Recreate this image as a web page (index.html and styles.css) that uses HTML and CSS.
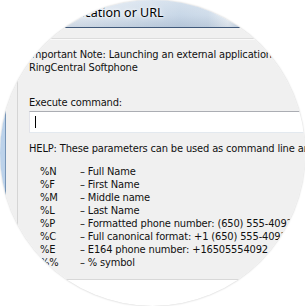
FILE: index.html
```html
<!DOCTYPE html>
<html lang="en">
<head>
    <meta charset="UTF-8">
    <meta name="viewport" content="width=device-width, initial-scale=1.0">
    <title>Launch Application or URL</title>
    <link rel="stylesheet" href="styles.css">
</head>
<body>
    <div class="lens">
        <div class="window">
            <div class="titlebar">
                <span class="title">Launch Application or URL</span>
            </div>

            <div class="frame">
                <div class="client">
                    <div class="strip"></div>

                    <div class="panel">
                        <p class="note">
                            Important Note: Launching an external application may bring it in front of the<br>
                            RingCentral Softphone
                        </p>

                        <label class="field-label">Execute command:</label>
                        <div class="cmd-input"><span class="caret"></span></div>

                        <p class="help">HELP: These parameters can be used as command line arguments:</p>

                        <div class="params">
                            <span class="code">%N</span><span class="desc">&ndash; Full Name</span>
                            <span class="code">%F</span><span class="desc">&ndash; First Name</span>
                            <span class="code">%M</span><span class="desc">&ndash; Middle name</span>
                            <span class="code">%L</span><span class="desc">&ndash; Last Name</span>
                            <span class="code">%P</span><span class="desc">&ndash; Formatted phone number: (650) 555-4092</span>
                            <span class="code">%C</span><span class="desc">&ndash; Full canonical format: +1 (650) 555-4092</span>
                            <span class="code">%E</span><span class="desc">&ndash; E164 phone number: +16505554092</span>
                            <span class="code">%%</span><span class="desc">&ndash; % symbol</span>
                        </div>
                    </div>
                </div>
            </div>
        </div>
    </div>
</body>
</html>
```

FILE: styles.css
```css
* {
    margin: 0;
    padding: 0;
    box-sizing: border-box;
}

body {
    background: #fff;
    font-family: "DejaVu Sans Condensed", "DejaVu Sans", sans-serif;
    font-stretch: condensed;
    font-size: 11px;
    letter-spacing: -0.15px;
    color: #111;
}

/* magnifier circle */
.lens {
    width: 305px;
    height: 306px;
    border-radius: 50%;
    overflow: hidden;
    box-shadow: 0 0 2px rgba(0, 0, 0, 0.25);
}

.window {
    width: 400px;
    white-space: nowrap;
}

.titlebar {
    height: 28px;
    padding-left: 9px;
    border-bottom: 1px solid #40597a;
    background:
        linear-gradient(180deg, rgba(255,255,255,0.25) 0%, rgba(255,255,255,0) 55%, rgba(40,70,110,0.12) 100%),
        linear-gradient(90deg, #f4f6f9 0%, #dde6f0 25%, #c8d7e7 45%, #cfdcea 52%, #edf2f7 57%, #b3c7dc 63%, #89a6c6 72%, #6f8fb3 85%, #7d9abb 100%);
    font-family: "Noto Sans", "Open Sans", sans-serif;
    font-stretch: normal;
    font-size: 12.5px;
    letter-spacing: 0;
    line-height: 25px;
    color: #000;
}

.title {
    text-shadow: 0 0 6px #fff, 0 0 3px #fff;
}

.frame {
    border-left: 5px solid #bcd2ea;
}

.client {
    border-left: 1px solid #7694b6;
    background: #f0f0f0;
}

.strip {
    height: 11px;
    border-bottom: 1px solid #dcdcdc;
    box-shadow: 0 1px 0 #fafafa;
}

.panel {
    margin-left: 11px;
    border-left: 1px solid #d5d5d5;
    border-bottom: 1px solid #d8d8d8;
    padding: 9px 0 10px 11px;
    line-height: 13px;
}

.note {
    margin-bottom: 22px;
}

.field-label {
    display: block;
}

.cmd-input {
    margin-top: 2px;
    height: 22px;
    padding: 4px 5px;
    background: #fff;
    border: 1px solid #abadb3;
    border-color: #abadb3 #dbdfe6 #e3e9ef #e2e3ea;
}

.caret {
    display: block;
    width: 1px;
    height: 12px;
    background: #000;
}

.help {
    margin-top: 9px;
}

.params {
    display: grid;
    grid-template-columns: 40px auto;
    justify-content: start;
    margin-top: 10px;
    padding-left: 11px;
}
```
